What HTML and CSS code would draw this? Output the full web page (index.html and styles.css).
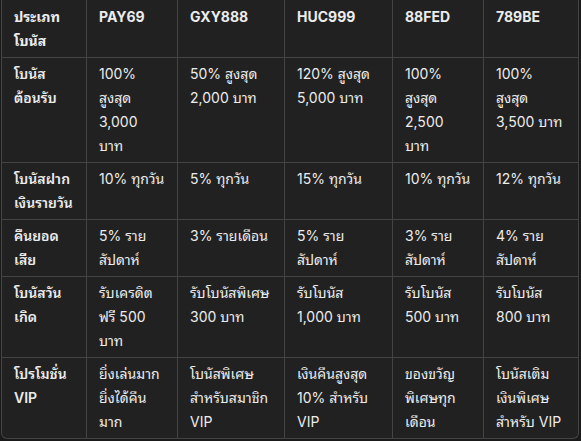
FILE: index.html
```html
<!DOCTYPE html>
<html lang="th">
<head>
<meta charset="utf-8">
<link rel="stylesheet" href="styles.css">
</head>
<body>
<div class="wrap">
<table class="bonus">
<colgroup>
<col class="c1"><col class="c2"><col class="c3"><col class="c4"><col class="c5"><col class="c6">
</colgroup>
<thead>
<tr><th>ประเภทโบนัส</th><th>PAY69</th><th>GXY888</th><th>HUC999</th><th>88FED</th><th>789BE</th></tr>
</thead>
<tbody>
<tr><th>โบนัสต้อนรับ</th><td>100% สูงสุด 3,000 บาท</td><td>50% สูงสุด 2,000 บาท</td><td>120% สูงสุด 5,000 บาท</td><td>100% สูงสุด 2,500 บาท</td><td>100% สูงสุด 3,500 บาท</td></tr>
<tr><th>โบนัสฝากเงินรายวัน</th><td>10% ทุกวัน</td><td>5% ทุกวัน</td><td>15% ทุกวัน</td><td>10% ทุกวัน</td><td>12% ทุกวัน</td></tr>
<tr><th>คืนยอดเสีย</th><td>5% รายสัปดาห์</td><td>3% รายเดือน</td><td>5% รายสัปดาห์</td><td>3% รายสัปดาห์</td><td>4% รายสัปดาห์</td></tr>
<tr><th>โบนัสวันเกิด</th><td>รับเครดิตฟรี 500 บาท</td><td>รับโบนัสพิเศษ 300 บาท</td><td>รับโบนัส 1,000 บาท</td><td>รับโบนัส 500 บาท</td><td>รับโบนัส 800 บาท</td></tr>
<tr><th>โปรโมชั่น VIP</th><td>ยิ่งเล่นมากยิ่งได้คืนมาก</td><td>โบนัสพิเศษสำหรับสมาชิก VIP</td><td>เงินคืนสูงสุด 10% สำหรับ VIP</td><td>ของขวัญพิเศษทุกเดือน</td><td>โบนัสเติมเงินพิเศษสำหรับ VIP</td></tr>
</tbody>
</table>
</div>
</body>
</html>
```
FILE: styles.css
```css
html, body {
  margin: 0;
  padding: 0;
  background: #1a1a1a;
}
body {
  font-family: "Inter", "Noto Sans Thai Looped", "Noto Sans Thai", "Noto Sans", sans-serif;
  font-size: 14px;
  color: #ececec;
}
.wrap {
  margin-left: 1px;
  width: 578px;
  box-sizing: border-box;
  border: 1px solid #444;
  border-top: none;
  border-radius: 0 0 6px 6px;
  overflow: hidden;
  background: #212121;
}
.bonus {
  width: 576px;
  table-layout: fixed;
  border-collapse: separate;
  border-spacing: 0;
}
.c1 { width: 85px; }
.c2 { width: 91px; }
.c3 { width: 107px; }
.c4 { width: 108px; }
.c5 { width: 91px; }
.c6 { width: 94px; }
.bonus th, .bonus td {
  box-sizing: border-box;
  padding: 4px 12px;
  line-height: 24px;
  text-align: left;
  vertical-align: top;
  border-right: 1px solid #444;
  border-bottom: 1px solid #444;
  word-wrap: break-word;
}
.bonus th {
  font-weight: 700;
}
.bonus tbody th {
  font-weight: 600;
  padding-right: 8px;
}
.bonus thead th {
  padding-top: 5px;
}
.bonus tr > :last-child {
  border-right: none;
}
.bonus tbody tr:last-child > * {
  border-bottom: none;
}
```
